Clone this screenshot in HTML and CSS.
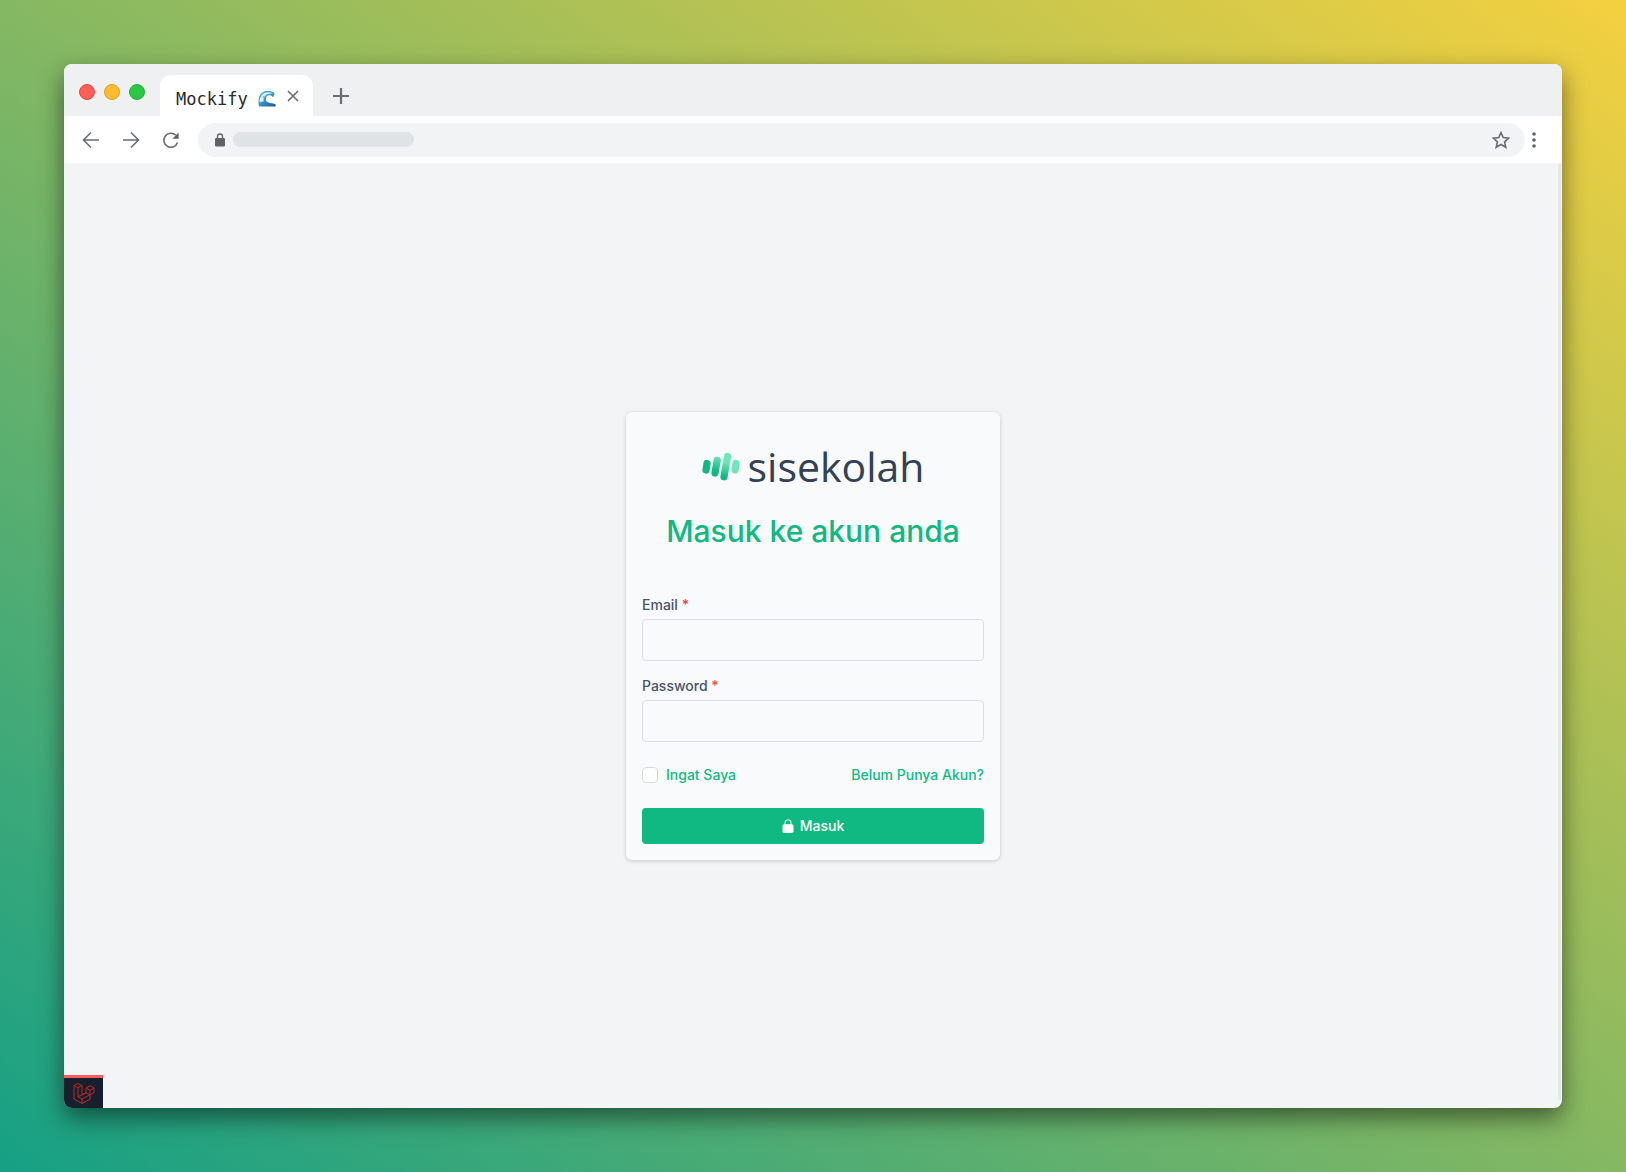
FILE: index.html
```html
<!DOCTYPE html>
<html lang="id">
<head>
<meta charset="utf-8">
<meta name="viewport" content="width=device-width, initial-scale=1">
<title>Sisekolah</title>
<link rel="stylesheet" href="styles.css">
</head>
<body>
<div class="window">
  <header class="tabstrip">
    <div class="lights"><span class="light light-close"></span><span class="light light-min"></span><span class="light light-max"></span></div>
    <div class="tab">
      <span class="tab-title">Mockify</span>
      <svg class="wave" width="18" height="18" viewBox="0 0 18 18" aria-hidden="true">
        <defs><linearGradient id="sea" x1="0" y1="0" x2="1" y2="1"><stop offset="0" stop-color="#5fc3e8"/><stop offset="1" stop-color="#0f5c9c"/></linearGradient></defs>
        <path d="M1.2 16.5C0 12 .2 7 3 3.8 6 .4 11.500 0 16 2.600c.8.9.5 2.200-.4 2.600.7 1-.3 2-1.200 1.500C12.500 4.600 9.500 5 8.200 7.200c-1 2-.2 4.300 2 5.300 2.300 1 4.500.3 7.500 2v2z" fill="url(#sea)"/>
        <path d="M1.500 12.500C1.300 8 3.200 4.500 6.500 3c3-1.300 6.500-1 8.500.6-3.500-.6-6.800.4-8.500 3-1 1.700-1.200 3.400-.8 5-1.500-.5-3 0-4.200.9z" fill="#e2f4fb"/>
        <path d="M1.500 9C2 4.500 5 1.500 9.500 1.500c2.500 0 4.500.8 6 1.700" fill="none" stroke="#2f9fce" stroke-width=".8"/>
        <path d="M9 4l-.8 1.500M12 3.800l-.3 1.500M5.500 6L5 8" stroke="#4ab2da" stroke-width=".8"/>
      </svg>
      <button class="icon-btn tab-close" aria-label="Close tab"><svg width="12" height="12" viewBox="0 0 12 12"><path d="M1 1l10 10M11 1L1 11"/></svg></button>
    </div>
    <button class="icon-btn new-tab" aria-label="New tab"><svg width="18" height="18" viewBox="0 0 18 18"><path d="M9 1v16M1 9h16"/></svg></button>
  </header>
  <nav class="toolbar">
    <button class="icon-btn" aria-label="Back"><svg width="18" height="18" viewBox="0 0 18 18"><path d="M17 9H2M9 1.500L1.500 9 9 16.500"/></svg></button>
    <button class="icon-btn" aria-label="Forward"><svg width="18" height="18" viewBox="0 0 18 18"><path d="M1 9h15M9 1.500L16.500 9 9 16.500"/></svg></button>
    <button class="icon-btn" aria-label="Reload"><svg width="18" height="18" viewBox="0 0 18 18"><path d="M15.500 11.500A7 7 0 1 1 13.700 4.200"/><path class="solid" d="M16.600 1.500v6.200h-6.200z"/></svg></button>
    <div class="address">
      <svg width="10" height="14" viewBox="0 0 10 14" aria-hidden="true"><path d="M2.500 6V3.500a2.500 2.500 0 0 1 5 0V6" fill="none" stroke="#5f6368" stroke-width="1.300"/><rect y="5" width="10" height="8.500" rx="1.200" fill="#5f6368"/></svg>
      <span class="url"></span>
      <button class="icon-btn star" aria-label="Bookmark"><svg width="18" height="18" viewBox="0 0 18 18"><path d="M9 1.500l2.200 5.100 5.600.5-4.200 3.700 1.200 5.500L9 13.500l-4.800 2.800 1.200-5.500L1.200 7.100l5.600-.5z"/></svg></button>
    </div>
    <button class="icon-btn menu" aria-label="Menu"><svg width="4" height="16" viewBox="0 0 4 16"><circle class="solid" cx="2" cy="2" r="1.800"/><circle class="solid" cx="2" cy="8" r="1.800"/><circle class="solid" cx="2" cy="14" r="1.800"/></svg></button>
  </nav>
  <main class="page">
    <form class="card">
      <div class="brand">
        <svg width="38" height="30" viewBox="0 0 38 30" aria-hidden="true">
          <defs>
            <linearGradient id="bar2" gradientUnits="userSpaceOnUse" x1="15" y1="4" x2="11" y2="19"><stop offset="0" stop-color="#6ee7b7"/><stop offset="1" stop-color="#10b981"/></linearGradient>
            <linearGradient id="bar3" gradientUnits="userSpaceOnUse" x1="24" y1="11" x2="20" y2="25"><stop offset="0" stop-color="#6ee7b7"/><stop offset="1" stop-color="#10b981"/></linearGradient>
          </defs>
          <g fill="none" stroke-width="7.200" stroke-linecap="round">
            <path d="M5 12.500L4 19" stroke="#10b981"/>
            <path d="M15.200 9.300L13 22" stroke="url(#bar2)"/>
            <path d="M25.500 5.500L22 25.800" stroke="url(#bar3)"/>
            <path d="M34 12.500L33 19" stroke="#6ee7b7"/>
          </g>
        </svg>
        <span class="brand-name">sisekolah</span>
      </div>
      <h1 class="title">Masuk ke akun anda</h1>
      <div class="field">
        <label for="email">Email <span class="required">*</span></label>
        <input class="text-input" id="email" type="email" required>
      </div>
      <div class="field">
        <label for="password">Password <span class="required">*</span></label>
        <input class="text-input" id="password" type="password" required>
      </div>
      <div class="options">
        <label class="remember" for="remember"><input class="check" id="remember" type="checkbox">Ingat Saya</label>
        <a class="register" href="#">Belum Punya Akun?</a>
      </div>
      <button class="submit" type="submit">
        <svg width="12" height="14" viewBox="0 0 12 14" aria-hidden="true"><path d="M3 6V3.800a3 3 0 0 1 6 0V6" fill="none" stroke="#b7ead7" stroke-width="1.300"/><rect x=".5" y="5.300" width="11" height="8.700" rx="1.800" fill="#fff"/></svg>
        Masuk
      </button>
    </form>
    <span class="scrollbar"></span>
    <a class="debugbar" href="#" aria-label="Debug bar">
      <svg width="22" height="22" viewBox="0 0 22 22"><path d="M1 3.500l4-2 4 2v9.500l4-2.300V6l4-2.300L21 6v4.500l-4 2.300v4.500L9 21.500l-8-4.500zM1 3.500l4 2.200 4-2.200M5 5.700v9L9 17l8-4.200M5 14.700L9 13M9 17v4.500M13 6l4 2.300L21 6M17 8.300v4.500M13 10.700l4 2.100M9 13l4-2.300"/></svg>
    </a>
  </main>
</div>
</body>
</html>
```

FILE: styles.css
```css
* { box-sizing: border-box; }

body {
  margin: 0;
  min-height: 100vh;
  padding: 64px;
  display: flex;
  background: linear-gradient(to top right, #16a085, #f4d03f);
  font-family: Inter, "Open Sans", sans-serif;
  font-size: 14px;
  line-height: 20px;
}

button, input { font: inherit; }

.window {
  flex: 1;
  display: flex;
  flex-direction: column;
  border-radius: 8px;
  overflow: hidden;
  background: #f3f4f6;
  box-shadow: 0 10px 24px rgba(0, 0, 0, 0.5);
}

.icon-btn {
  display: flex;
  padding: 0;
  border: 0;
  background: none;
  flex: none;
}

.icon-btn svg {
  fill: none;
  stroke: #6a6d71;
  stroke-width: 1.6;
}

.icon-btn .solid { fill: #5f6368; stroke: none; }

.tabstrip {
  display: flex;
  align-items: flex-end;
  height: 52px;
  padding-left: 15px;
  background: #eff0f2;
}

.lights {
  display: flex;
  gap: 9px;
  padding-bottom: 16px;
}

.light {
  width: 16px;
  height: 16px;
  border-radius: 50%;
  border: 1px solid;
}

.light-close { background: #ff5f57; border-color: #e2483f; }
.light-min { background: #febc2e; border-color: #dfa023; }
.light-max { background: #28c840; border-color: #24ae36; }

.tab {
  display: flex;
  align-items: center;
  height: 41px;
  margin-left: 15px;
  padding: 6px 14px 0 16px;
  background: #fff;
  border-radius: 11px 11px 0 0;
}

.tab-title {
  color: #27292c;
  font-family: "DejaVu Sans Mono", monospace;
  font-size: 17px;
}

.wave { margin-left: 10px; }
.tab-close { margin-left: 11px; padding-bottom: 6px; }
.new-tab { margin: 0 0 11px 19px; }
.new-tab svg { stroke-width: 2.2; }

.toolbar {
  display: flex;
  align-items: center;
  gap: 22px;
  height: 47px;
  padding: 0 26px 0 18px;
  background: #fff;
}

.address {
  flex: 1;
  display: flex;
  align-items: center;
  gap: 8px;
  height: 34px;
  margin-left: -4px;
  padding: 0 15px 0 17px;
  border-radius: 17px;
  background: #f1f3f4;
}

.url {
  width: 181px;
  height: 15px;
  border-radius: 8px;
  background: #dfe3e6;
}

.star { margin-left: auto; }
.menu { margin-left: -15px; }

.page {
  position: relative;
  flex: 1;
  display: flex;
  align-items: center;
  justify-content: center;
  padding: 32px;
}

.card {
  width: 374px;
  padding: 30px 16px 16px;
  border-radius: 6px;
  background: #f9fafc;
  box-shadow: 0 1px 4px rgba(0, 0, 0, 0.18);
}

.brand {
  display: flex;
  align-items: center;
  justify-content: center;
  gap: 8px;
  height: 48px;
}

.brand-name {
  color: #334155;
  font-family: "Open Sans", sans-serif;
  font-size: 41px;
  line-height: 48px;
}

.title {
  margin: 23px 0 46px;
  color: #10b981;
  font-size: 30px;
  font-weight: 500;
  line-height: 36px;
  text-align: center;
  white-space: nowrap;
}

.field {
  display: flex;
  flex-direction: column;
  gap: 4px;
  margin-bottom: 15px;
  color: #475569;
  font-weight: 500;
}

.required { color: #ef4444; }

.text-input {
  width: 100%;
  height: 42px;
  padding: 8px 12px;
  border: 1px solid #dcdee2;
  border-radius: 4px;
  background: transparent;
}

.options {
  display: flex;
  align-items: center;
  justify-content: space-between;
  margin: 23px 0;
  color: #10b981;
  font-weight: 500;
}

.remember { display: flex; align-items: center; gap: 8px; }

.check {
  appearance: none;
  width: 16px;
  height: 16px;
  margin: 0;
  border: 1px solid #d8dae2;
  border-radius: 4px;
  background: #fff;
}

.register { color: inherit; text-decoration: none; }

.submit {
  display: flex;
  align-items: center;
  justify-content: center;
  gap: 6px;
  width: 100%;
  height: 36px;
  border: 0;
  border-radius: 4px;
  background: #10b981;
  color: #fff;
  font-weight: 500;
}

.scrollbar {
  position: absolute;
  top: 1px;
  right: 1px;
  bottom: 8px;
  width: 3px;
  background: #e6e7e9;
}

.debugbar {
  position: absolute;
  left: 0;
  bottom: 0;
  display: flex;
  justify-content: center;
  align-items: center;
  width: 39px;
  height: 33px;
  border-top: 3px solid #fb5a5f;
  background: #18202d;
}

.debugbar svg { fill: none; stroke: #b92b27; stroke-width: 1; }
```
